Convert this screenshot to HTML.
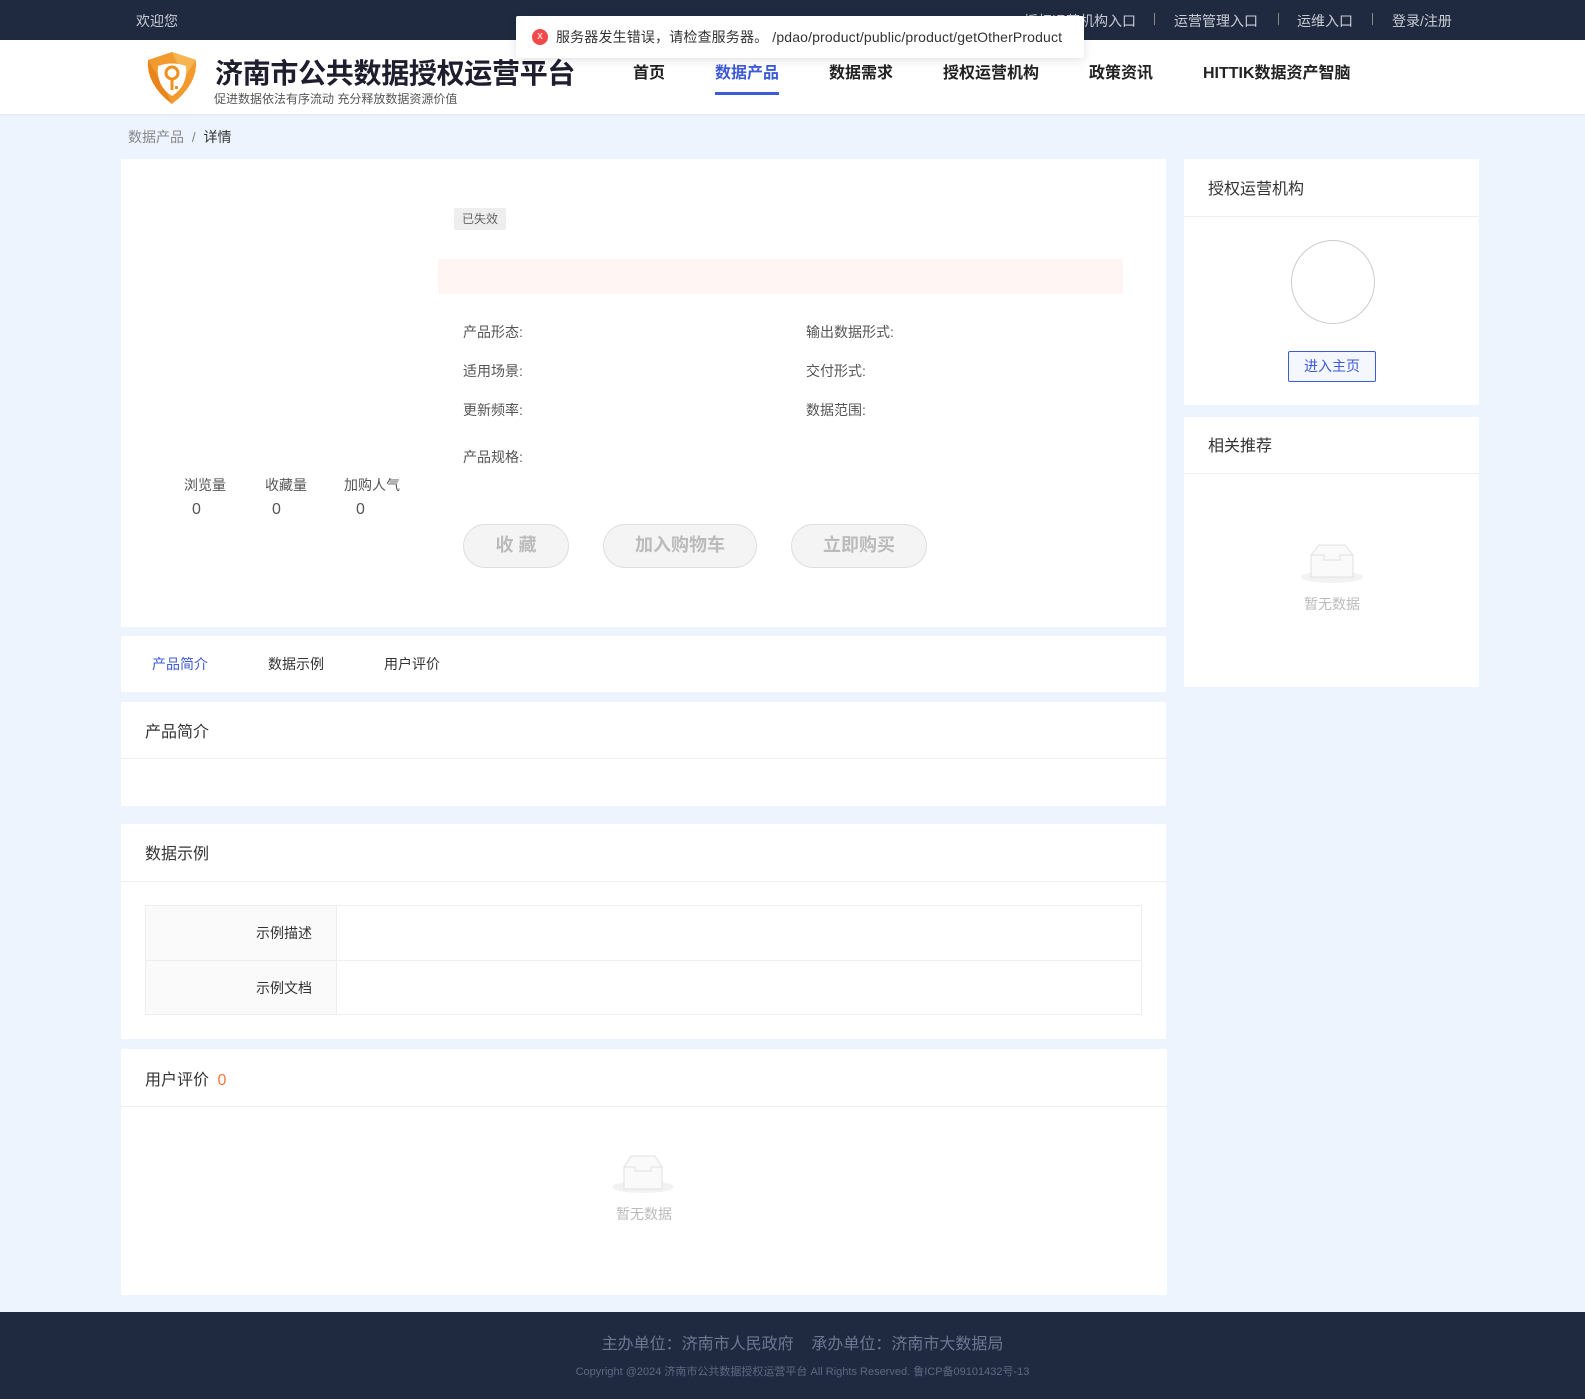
<!DOCTYPE html>
<html><head><meta charset="utf-8"><style>
*{margin:0;padding:0;box-sizing:border-box}
body{width:1585px;height:1399px;background:#eef4fe;font-family:"Liberation Sans","Noto Sans CJK SC",sans-serif;position:relative;overflow:hidden;color:#333}
.a{position:absolute}
.top{left:0;top:0;width:1585px;height:40px;background:#1f2a40;color:#c9ccd4;font-size:14px}
.hdr{left:0;top:40px;width:1585px;height:74px;background:#fff;box-shadow:0 1px 3px rgba(0,0,0,.05)}
.nav{font-size:16px;font-weight:bold;color:#222;top:59px}
.card{background:#fff}
.lab{font-size:14px;color:#555}
.btn{border:1px solid #ddd;background:#f4f4f4;color:#bbb;font-size:18px;font-weight:bold;border-radius:22px;text-align:center;line-height:41px}
.hline{height:1px;background:#eee}
.ct{font-size:16px;color:#333}
</style></head><body>
<div class="a top">
 <span class="a" style="left:136px;top:11px">欢迎您</span>
 <span class="a" style="left:1024px;top:11px">授权运营机构入口</span>
 <span class="a" style="left:1154px;top:13px;width:1px;height:12px;background:#888"></span>
 <span class="a" style="left:1174px;top:11px">运营管理入口</span>
 <span class="a" style="left:1278px;top:13px;width:1px;height:12px;background:#888"></span>
 <span class="a" style="left:1297px;top:11px">运维入口</span>
 <span class="a" style="left:1372px;top:13px;width:1px;height:12px;background:#888"></span>
 <span class="a" style="left:1392px;top:11px">登录/注册</span>
</div>
<div class="a hdr"></div>
<svg class="a" style="left:144px;top:50px" width="56" height="56" viewBox="0 0 56 56">
 <path d="M28 2 L52 10 Q54 34 28 54 Q2 34 4 10 Z" fill="#f29a2e"/>
 <path d="M28 2 L52 10 L40 28 Z" fill="#f7b552"/><path d="M4 10 L16 30 L28 54 Q2 34 4 10Z" fill="#e9831c"/>
 <path d="M14 16 Q28 11 42 16 Q44 36 28 46 Q12 36 14 16Z" fill="#fff"/>
 <circle cx="28" cy="23" r="6" fill="none" stroke="#f0901e" stroke-width="3"/>
 <rect x="26.5" y="28" width="3" height="12" fill="#f0901e"/><rect x="31" y="36" width="3" height="3" fill="#f0901e"/>
</svg>
<div class="a" style="left:215px;top:52px;font-size:28px;font-weight:bold;color:#1e1e2e;letter-spacing:-0.3px">济南市公共数据授权运营平台</div>
<div class="a" style="left:214px;top:90px;font-size:12px;color:#555">促进数据依法有序流动 充分释放数据资源价值</div>
<div class="a nav" style="left:633px">首页</div>
<div class="a nav" style="left:715px;color:#3d5ad8">数据产品</div>
<div class="a" style="left:715px;top:92px;width:64px;height:3px;background:#3d5ad8"></div>
<div class="a nav" style="left:829px">数据需求</div>
<div class="a nav" style="left:943px">授权运营机构</div>
<div class="a nav" style="left:1089px">政策资讯</div>
<div class="a nav" style="left:1203px">HITTIK数据资产智脑</div>

<div class="a" style="left:516px;top:16px;width:568px;height:42px;background:#fff;box-shadow:0 2px 10px rgba(0,0,0,.12);border-radius:2px">
 <div class="a" style="left:16px;top:13px;width:16px;height:16px;border-radius:50%;background:#f04a4a;color:#fff;font-size:11px;text-align:center;line-height:15px">x</div>
 <div class="a" style="left:40px;top:11px;font-size:14px;color:#333;letter-spacing:0.15px">服务器发生错误，请检查服务器。 /pdao/product/public/product/getOtherProduct</div>
</div>

<div class="a" style="left:128px;top:127px;font-size:14px;color:#888">数据产品 &nbsp;/&nbsp; <span style="color:#333">详情</span></div>

<div class="a card" style="left:121px;top:159px;width:1045px;height:468px">
 <div class="a" style="left:333px;top:49px;width:52px;height:22px;background:#eee;border-radius:2px;font-size:12px;color:#666;text-align:center;line-height:22px">已失效</div>
 <div class="a" style="left:317px;top:100px;width:685px;height:35px;background:#fff6f4"></div>
 <div class="a lab" style="left:342px;top:163px">产品形态:</div>
 <div class="a lab" style="left:685px;top:163px">输出数据形式:</div>
 <div class="a lab" style="left:342px;top:202px">适用场景:</div>
 <div class="a lab" style="left:685px;top:202px">交付形式:</div>
 <div class="a lab" style="left:342px;top:241px">更新频率:</div>
 <div class="a lab" style="left:685px;top:241px">数据范围:</div>
 <div class="a lab" style="left:342px;top:288px">产品规格:</div>
 <div class="a lab" style="left:63px;top:316px">浏览量</div>
 <div class="a lab" style="left:144px;top:316px">收藏量</div>
 <div class="a lab" style="left:223px;top:316px">加购人气</div>
 <div class="a" style="left:71px;top:342px;font-size:16px;color:#555">0</div>
 <div class="a" style="left:151px;top:342px;font-size:16px;color:#555">0</div>
 <div class="a" style="left:235px;top:342px;font-size:16px;color:#555">0</div>
 <div class="a btn" style="left:342px;top:365px;width:106px;height:44px">收 藏</div>
 <div class="a btn" style="left:482px;top:365px;width:154px;height:44px">加入购物车</div>
 <div class="a btn" style="left:670px;top:365px;width:136px;height:44px">立即购买</div>
</div>

<div class="a card" style="left:121px;top:636px;width:1045px;height:56px">
 <div class="a" style="left:31px;top:18px;font-size:14px;color:#3d5ad8">产品简介</div>
 <div class="a" style="left:147px;top:18px;font-size:14px;color:#333">数据示例</div>
 <div class="a" style="left:263px;top:18px;font-size:14px;color:#333">用户评价</div>
</div>

<div class="a card" style="left:121px;top:702px;width:1045px;height:104px">
 <div class="a ct" style="left:24px;top:16px">产品简介</div>
 <div class="a hline" style="left:0;top:56px;width:1045px"></div>
</div>

<div class="a card" style="left:121px;top:824px;width:1045px;height:215px">
 <div class="a ct" style="left:24px;top:16px">数据示例</div>
 <div class="a hline" style="left:0;top:57px;width:1045px"></div>
 <div class="a" style="left:24px;top:81px;width:997px;height:110px;border:1px solid #eee">
  <div class="a" style="left:0;top:0;width:191px;height:108px;background:#fafafa;border-right:1px solid #eee"></div>
  <div class="a hline" style="left:0;top:54px;width:995px"></div>
  <div class="a" style="left:110px;top:17px;font-size:14px;color:#333">示例描述</div>
  <div class="a" style="left:110px;top:72px;font-size:14px;color:#333">示例文档</div>
 </div>
</div>

<div class="a card" style="left:121px;top:1049px;width:1046px;height:246px">
 <div class="a ct" style="left:24px;top:17px">用户评价 <span style="color:#f5793b;margin-left:4px">0</span></div>
 <div class="a hline" style="left:0;top:57px;width:1046px"></div>
 <svg class="a" style="left:490px;top:102px" width="64" height="44" viewBox="0 0 64 44"><ellipse cx="32" cy="36" rx="31" ry="6" fill="#f2f2f2"/><path d="M13 16 L20 5 H44 L51 16 V38 H13Z" fill="#fafafa" stroke="#e0e0e0"/><path d="M13 16 H24 V20 H40 V16 H51" fill="none" stroke="#e0e0e0"/></svg>
 <div class="a" style="left:495px;top:155px;font-size:14px;color:#bbb">暂无数据</div>
</div>

<div class="a card" style="left:1184px;top:159px;width:295px;height:246px">
 <div class="a ct" style="left:24px;top:16px">授权运营机构</div>
 <div class="a hline" style="left:0;top:57px;width:295px"></div>
 <div class="a" style="left:107px;top:81px;width:84px;height:84px;border-radius:50%;border:1px solid #ccc"></div>
 <div class="a" style="left:104px;top:192px;width:88px;height:31px;border:1px solid #3d5ad8;background:#f5f7ff;border-radius:2px;color:#3d5ad8;font-size:14px;text-align:center;line-height:29px">进入主页</div>
</div>
<div class="a card" style="left:1184px;top:417px;width:295px;height:270px">
 <div class="a ct" style="left:24px;top:15px">相关推荐</div>
 <div class="a hline" style="left:0;top:56px;width:295px"></div>
 <svg class="a" style="left:116px;top:124px" width="64" height="44" viewBox="0 0 64 44"><ellipse cx="32" cy="36" rx="31" ry="6" fill="#f2f2f2"/><path d="M11 14 L19 4 H45 L53 14 V36 H11Z" fill="#fafafa" stroke="#e0e0e0"/><path d="M11 14 H24 V19 H40 V14 H53" fill="none" stroke="#e0e0e0"/></svg>
 <div class="a" style="left:120px;top:177px;font-size:14px;color:#bbb">暂无数据</div>
</div>

<div class="a" style="left:0;top:1312px;width:1585px;height:87px;background:#1f2a40">
 <div class="a" style="left:10px;width:1585px;text-align:center;top:18px;font-size:16px;color:#6c7892">主办单位：济南市人民政府 &nbsp;&nbsp; 承办单位：济南市大数据局</div>
 <div class="a" style="left:10px;width:1585px;text-align:center;top:51px;font-size:11px;color:#5d6882">Copyright @2024 济南市公共数据授权运营平台 All Rights Reserved. 鲁ICP备09101432号-13</div>
</div>
</body></html>
